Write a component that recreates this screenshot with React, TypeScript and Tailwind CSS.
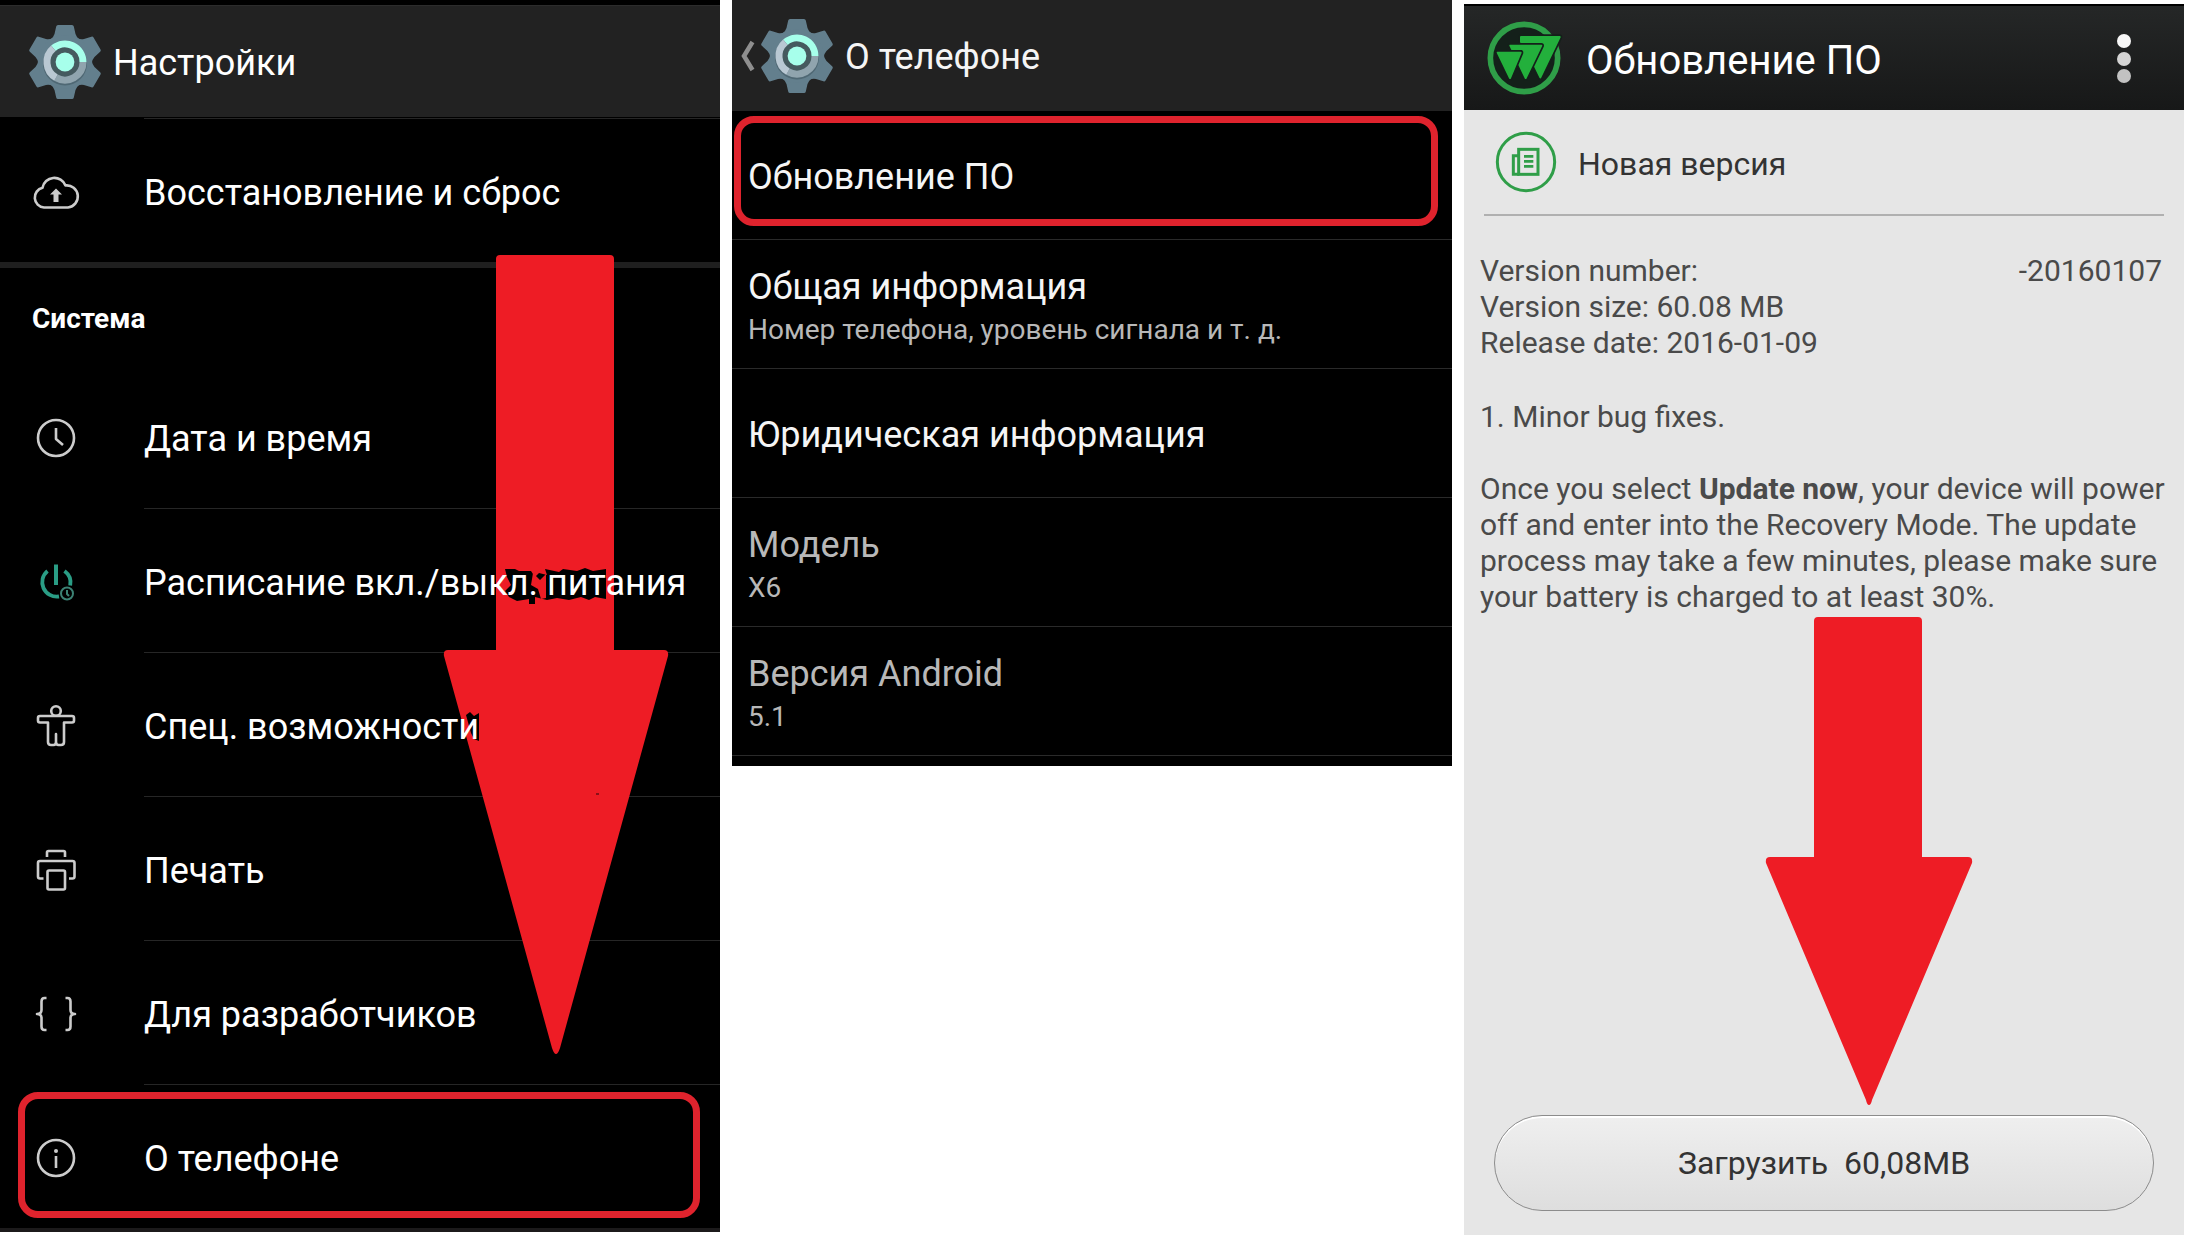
import { ReactNode } from "react";

function GearIcon() {
  return (
    <svg viewBox="-40 -40 80 80" className="size-20 shrink-0">
      <g fill="#637f8d">
        {[0, 60, 120, 180, 240, 300].map((angle) => (
          <path
            key={angle}
            transform={`rotate(${angle})`}
            d="M-7 -37H7Q8.500 -37 8.800 -35.500L10.500 -28Q11.500 -25 14 -23L0 0L-14 -23Q-11.500 -25 -10.500 -28L-8.800 -35.500Q-8.500 -37 -7 -37Z"
          />
        ))}
        <circle r="27" />
      </g>
      <circle r="22" cy="1.500" fill="#4f6874" />
      <circle r="16" fill="#455a5f" />
      <g fill="none" strokeWidth="7">
        <path d="M-11.600 -13.800A18 18 0 0 1 18 0" stroke="#a7ffeb" />
        <path d="M18 0A18 18 0 0 1 -9 15.600" stroke="#90a4ae" />
        <path d="M-9 15.600A18 18 0 0 1 -11.600 -13.800" stroke="#b9c8d3" />
      </g>
      <circle r="9.400" fill="#a7ffeb" />
    </svg>
  );
}

function LineIcon({
  children,
  color = "#cccccc",
}: {
  children: ReactNode;
  color?: string;
}) {
  return (
    <svg
      viewBox="0 0 48 48"
      className="size-12"
      fill="none"
      stroke={color}
      strokeWidth="2.600"
      strokeLinejoin="round"
    >
      {children}
    </svg>
  );
}

const cloudIcon = (
  <LineIcon>
    <path d="M12 39.500A10 10 0 0 1 10.500 19.800A12 12 0 0 1 33.500 17.500A11 11 0 0 1 36 39.500Z" />
    <path d="M24 20.500L30 26.500H26.500V34H21.500V26.500H18Z" fill="#cccccc" stroke="none" />
  </LineIcon>
);

const clockIcon = (
  <LineIcon>
    <circle cx="24" cy="24" r="18" />
    <path d="M24 14V25L31 31" />
  </LineIcon>
);

const powerIcon = (
  <LineIcon color="#2a9d85">
    <path
      d="M15.500 13A14.500 14.500 0 0 0 27 38.500M32.500 13A14.500 14.500 0 0 1 38.200 27.500"
      strokeWidth="3.800"
    />
    <path d="M24 6.500V27" strokeWidth="4" />
    <g stroke="#3c8274" strokeWidth="2">
      <circle cx="35" cy="35.500" r="6" />
      <path d="M35 32V36L37 38" />
    </g>
  </LineIcon>
);

const personIcon = (
  <LineIcon>
    <circle cx="24" cy="9" r="4.800" />
    <path d="M8 14H40Q42 14 42 16V18.500Q42 20.500 40 20.500H32V40Q32 43 29 43H26.500Q24 43 24 40V32V40Q24 43 21.500 43H19Q16 43 16 40V20.500H8Q6 20.500 6 18.500V16Q6 14 8 14Z" />
  </LineIcon>
);

const printerIcon = (
  <LineIcon>
    <path d="M15 11V6.500Q15 5 16.500 5H31.500Q33 5 33 6.500V11" />
    <path d="M11.500 32.500H8Q6 32.500 6 30.500V17Q6 15 8 15H40.500Q42.500 15 42.500 17V30.500Q42.500 32.500 40.500 32.500H37" />
    <rect x="15.500" y="24.500" width="17.500" height="19" rx="1.500" />
  </LineIcon>
);

const bracesIcon = (
  <LineIcon>
    <path d="M14.500 8H12.500Q9.500 8 9.500 11.500V20Q9.500 24 5 24Q9.500 24 9.500 28V36.500Q9.500 40 12.500 40H14.500" />
    <path d="M33.500 8H35.500Q38.500 8 38.500 11.500V20Q38.500 24 43 24Q38.500 24 38.500 28V36.500Q38.500 40 35.500 40H33.500" />
  </LineIcon>
);

const infoIcon = (
  <LineIcon>
    <circle cx="24" cy="24" r="18" />
    <path d="M24 22V34" />
    <circle cx="24" cy="17" r="2" fill="#cccccc" stroke="none" />
  </LineIcon>
);

// each triangle sits on a dark outline that cuts it out of the one behind
const logoTriangles = [
  "M111 57H227L169 178L146 131L174 72H111Z",
  "M79 83H172L125 180L102 132L120 93H84Z",
  "M41 104H110L78 180Z",
];

function UpdateLogo() {
  return (
    <svg viewBox="0 0 240 240" className="size-20 shrink-0">
      <circle cx="120" cy="120" r="101" fill="#14201a" stroke="#2f9e48" strokeWidth="17" />
      {logoTriangles.map((d) => (
        <g key={d} strokeLinejoin="round">
          <path d={d} fill="#14201a" stroke="#14201a" strokeWidth="16" />
          <path d={d} fill="#23b03c" stroke="#23b03c" strokeWidth="6" />
        </g>
      ))}
    </svg>
  );
}

function NewsIcon() {
  return (
    <svg
      viewBox="0 0 192 192"
      className="size-16 shrink-0"
      fill="none"
      stroke="#2f9e48"
      strokeWidth="9"
    >
      <circle cx="96" cy="96" r="86" />
      <rect x="74" y="58" width="58" height="75" />
      <path d="M74 77H58V133H76" />
      <path d="M90 79H118M90 94H118M90 109H118" strokeWidth="8" />
    </svg>
  );
}

interface SettingsRowProps {
  icon: ReactNode;
  label: string;
  divider?: boolean;
}

function SettingsRow({ icon, label, divider = true }: SettingsRowProps) {
  return (
    <button type="button" className="flex h-36 w-full text-left">
      <span className="flex w-36 shrink-0 items-center pt-1 pl-8">{icon}</span>
      <span
        className={`flex flex-1 items-center border-t pt-1 text-4xl whitespace-nowrap ${
          divider ? "border-[#262626]" : "border-transparent"
        }`}
      >
        <span className="relative z-10">{label}</span>
      </span>
    </button>
  );
}

const systemRows: SettingsRowProps[] = [
  { icon: clockIcon, label: "Дата и время", divider: false },
  { icon: powerIcon, label: "Расписание вкл./выкл. питания" },
  { icon: personIcon, label: "Спец. возможности" },
  { icon: printerIcon, label: "Печать" },
  { icon: bracesIcon, label: "Для разработчиков" },
  { icon: infoIcon, label: "О телефоне" },
];

function SettingsScreen() {
  return (
    <section className="relative bg-black pt-[5px] text-white">
      <header className="mb-px flex h-28 items-center border-t border-[#2c2c2c] bg-[#222222] pl-[25px]">
        <GearIcon />
        <h1 className="pt-0.5 pl-2 text-4xl">Настройки</h1>
      </header>
      <SettingsRow icon={cloudIcon} label="Восстановление и сброс" />
      <div className="h-1.5 bg-[#1f1f1f]" />
      <h2 className="flex h-24 items-center pt-1.5 pl-8 text-[28px] font-bold">
        Система
      </h2>
      {systemRows.map((row) => (
        <SettingsRow key={row.label} {...row} />
      ))}
      <div className="h-1 bg-[#1c1a1b]" />

      <svg
        viewBox="0 0 226 799"
        className="absolute top-[255px] left-[443px] h-[799px] w-[226px]"
      >
        <path
          d="M57 0H167Q171 0 171 4V395H221Q226 395 225 401L117 793Q115 799 113 799Q111 799 109 793L1 401Q0 395 5 395H53V4Q53 0 57 0Z"
          fill="#ee1c25"
        />
        {/* dark smudges behind the labels */}
        <path
          d="M62 314H72L76 316H88L92 322L96 318L104 320L102 314L116 317L120 314L134 316L142 313L150 316L163 314V344L152 342L146 345L138 342L126 345L114 343L104 345L92 342V349H86V344L74 346L66 342L62 336L68 330L64 322Z"
          fill="#000000"
        />
        <path d="M90 318L97 325L103 319V343L98 344L95 334L88 330Z" fill="#ee1c25" />
        <path d="M23 460L27 457L31 461L36 458V486L31 484L28 478Z" fill="#000000" />
        <path d="M153 538H156V540H153Z" fill="#8a1018" />
      </svg>
      <div className="absolute right-5 bottom-[14px] left-[18px] h-[126px] rounded-[20px] border-7 border-[#df232d]" />
    </section>
  );
}

interface PhoneInfo {
  title: string;
  detail?: string;
  muted?: boolean;
}

const phoneInfo: PhoneInfo[] = [
  { title: "Обновление ПО" },
  { title: "Общая информация", detail: "Номер телефона, уровень сигнала и т. д." },
  { title: "Юридическая информация" },
  { title: "Модель", detail: "X6", muted: true },
  { title: "Версия Android", detail: "5.1", muted: true },
];

function AboutScreen() {
  return (
    <section className="relative bg-black pb-[10px] text-[#f5f5f5]">
      <header className="flex h-[111px] items-center bg-[#222222] pl-2">
        <button type="button" aria-label="Назад" className="-mr-[3px]">
          <svg
            viewBox="0 0 20 40"
            className="h-10 w-5"
            fill="none"
            stroke="#8f8f8f"
            strokeWidth="4.500"
          >
            <path d="M12.500 6L4 20L12.500 34" />
          </svg>
        </button>
        <GearIcon />
        <h1 className="pt-0.5 pl-2 text-4xl">О телефоне</h1>
      </header>
      {phoneInfo.map(({ title, detail, muted }) => (
        <button
          key={title}
          type="button"
          className={`flex h-[129px] w-full flex-col justify-center border-b border-[#2a2a2a] pl-4 text-left ${
            detail ? "pt-1.5" : "pt-1"
          } ${muted ? "text-[#b8b8b8]" : ""}`}
        >
          <span className="text-4xl leading-[46px]">{title}</span>
          {detail && (
            <span className="text-[28px] leading-10 text-[#b8b8b8]">{detail}</span>
          )}
        </button>
      ))}
      <div className="absolute top-[116px] right-[14px] left-[2px] h-[110px] rounded-[20px] border-7 border-[#df232d]" />
    </section>
  );
}

function UpdateScreen() {
  return (
    <section className="mt-1 bg-[#e6e6e6] pb-6 text-[#4a4a4a]">
      <header className="flex h-[106px] items-center border-t-2 border-black bg-linear-to-b from-[#252727] to-[#171818] pr-[42px] pl-5 text-white">
        <UpdateLogo />
        <h1 className="flex-1 pt-1.5 pl-[22px] text-[40px]">Обновление ПО</h1>
        <button type="button" aria-label="Меню">
          <svg viewBox="0 0 36 60" className="h-15 w-9">
            <circle cx="18" cy="13" r="7" fill="#f7f7f7" />
            <circle cx="18" cy="31" r="7" fill="#d4d4d4" />
            <circle cx="18" cy="48" r="7" fill="#c2c2c2" />
          </svg>
        </button>
      </header>

      <div className="mr-5 ml-5 flex h-[106px] items-center gap-5 border-b-2 border-[#b0b0b0] pl-[10px]">
        <NewsIcon />
        <h2 className="pt-1 text-[32px] text-[#333333]">Новая версия</h2>
      </div>

      <div className="pt-[37px] pr-2 pl-4 text-[30px] leading-9">
        <p className="flex justify-between pr-[14px]">
          <span>Version number:</span>
          <span>-20160107</span>
        </p>
        <p>Version size: 60.08 MB</p>
        <p>Release date: 2016-01-09</p>
        <p className="mt-[38px]">1. Minor bug fixes.</p>
        <p className="mt-9">
          Once you select <b>Update now</b>, your device will power off and enter
          into the Recovery Mode. The update process may take a few minutes, please
          make sure your battery is charged to at least 30%.
        </p>
      </div>

      <svg viewBox="0 0 208 488" className="mt-[2px] ml-[301px] h-[488px] w-52">
        <path
          d="M53 0H153Q157 0 157 4V240H203Q208 240 207 246L107 483Q106 488 104 488Q102 488 101 483L1 246Q0 240 5 240H49V4Q49 0 53 0Z"
          fill="#ee1c25"
        />
      </svg>

      <div className="pt-[10px] pr-[30px] pl-[30px]">
        <button
          type="button"
          className="h-24 w-full rounded-full border border-[#8c8c8c] bg-linear-to-b from-[#efefef] to-[#dedede] text-[32px] whitespace-pre text-[#333333] inset-shadow-[0_2px_0_#ffffff]"
        >
          {"Загрузить  60,08MB"}
        </button>
      </div>
    </section>
  );
}

export default function App() {
  return (
    <main className="grid grid-cols-3 items-start gap-3 bg-white pr-1 font-[Roboto,sans-serif]">
      <SettingsScreen />
      <AboutScreen />
      <UpdateScreen />
    </main>
  );
}
